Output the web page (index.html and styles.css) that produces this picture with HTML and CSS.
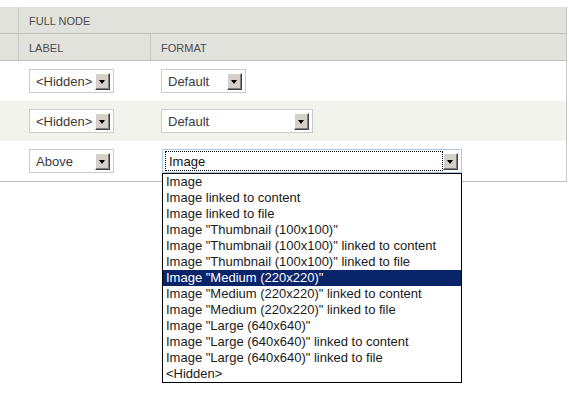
FILE: index.html
```html
<!DOCTYPE html>
<html lang="en">
<head>
  <meta charset="UTF-8" />
  <meta name="viewport" content="width=device-width, initial-scale=1.0"/>
  <link rel="stylesheet" href="styles.css">
  <title>Display fields</title>
</head>
<body>
  <div class="fields-table">
    <!-- cabecera -->
    <div class="head-row">
      <div class="cell first"></div>
      <div class="cell span-2">FULL NODE</div>
    </div>
    <div class="head-row">
      <div class="cell first"></div>
      <div class="cell label-col">LABEL</div>
      <div class="cell">FORMAT</div>
    </div>

    <div class="body-row">
      <div class="cell first"></div>
      <div class="cell label-col">
        <div class="select w-small"><span class="select-text">&lt;Hidden&gt;</span><span class="select-btn"></span></div>
      </div>
      <div class="cell">
        <div class="select w-small"><span class="select-text">Default</span><span class="select-btn"></span></div>
      </div>
    </div>

    <div class="body-row even">
      <div class="cell first"></div>
      <div class="cell label-col">
        <div class="select w-small"><span class="select-text">&lt;Hidden&gt;</span><span class="select-btn"></span></div>
      </div>
      <div class="cell">
        <div class="select w-medium"><span class="select-text">Default</span><span class="select-btn"></span></div>
      </div>
    </div>

    <div class="body-row">
      <div class="cell first"></div>
      <div class="cell label-col">
        <div class="select w-small"><span class="select-text">Above</span><span class="select-btn"></span></div>
      </div>
      <div class="cell">
        <div class="select w-large focused">
          <span class="select-text dotted">Image</span><span class="select-btn"></span>
          <ul class="dropdown">
            <li>Image</li>
            <li>Image linked to content</li>
            <li>Image linked to file</li>
            <li>Image "Thumbnail (100x100)"</li>
            <li>Image "Thumbnail (100x100)" linked to content</li>
            <li>Image "Thumbnail (100x100)" linked to file</li>
            <li class="selected">Image "Medium (220x220)"</li>
            <li>Image "Medium (220x220)" linked to content</li>
            <li>Image "Medium (220x220)" linked to file</li>
            <li>Image "Large (640x640)"</li>
            <li>Image "Large (640x640)" linked to content</li>
            <li>Image "Large (640x640)" linked to file</li>
            <li>&lt;Hidden&gt;</li>
          </ul>
        </div>
      </div>
    </div>
  </div>
</body>
</html>
```

FILE: styles.css
```css
* {
  box-sizing: border-box;
}

:root {
  --head-bg: #e2e2dc;
  --row-alt: #f3f3ee;
  --line: #bfbfba;
  --text-color: #333333;
  --win-gray: #d4d0c8;
  --win-blue: #0a246a;
}

html, body {
  margin: 0;
  padding: 0;
  height: 100%;
  overflow: hidden;
  background: #ffffff;
  font-family: "Liberation Sans", Arial, sans-serif;
  color: var(--text-color);
}

.fields-table {
  width: 567px;
  margin-top: 7px;
  border-right: 1px solid #c8c8c4;
  border-bottom: 1px solid var(--line);
}

.head-row,
.body-row {
  display: flex;
}

.head-row {
  height: 27px;
  background: var(--head-bg);
  border-bottom: 1px solid var(--line);
  font-size: 11px;
  color: #4a4a4a;
}

.head-row .cell {
  display: flex;
  align-items: center;
  padding-left: 10px;
  padding-top: 1px;
}

.head-row .first,
.head-row .label-col {
  border-right: 1px solid #c9c9c3;
}

.cell {
  flex: 1;
}

.cell.first {
  flex: none;
  width: 19px;
  padding: 0;
}

.cell.label-col {
  flex: none;
  width: 132px;
}

.body-row {
  height: 40px;
  align-items: center;
}

.body-row .cell {
  padding-left: 10px;
}

.body-row .cell.first {
  padding: 0;
}

.body-row.even {
  background: var(--row-alt);
}

/* selects dibujados a mano */
.select {
  position: relative;
  display: flex;
  align-items: center;
  height: 24px;
  border: 1px solid #cccccc;
  background: #ffffff;
  padding: 0 3px 0 6px;
  font-size: 13px;
}

.w-small { width: 85px; }
.w-medium { width: 152px; }
.w-large { width: 300px; margin-left: 1px; }

.select-text {
  flex: 1;
  white-space: nowrap;
  color: #3a3a3a;
}

.select-btn {
  position: relative;
  flex: none;
  width: 15px;
  height: 17px;
  background: var(--win-gray);
  border-top: 1px solid #ffffff;
  border-left: 1px solid #ffffff;
  border-right: 1px solid #404040;
  border-bottom: 1px solid #404040;
  box-shadow: inset -1px -1px 0 #808080;
}

.select-btn::after {
  content: '';
  position: absolute;
  left: 3px;
  top: 6px;
  border-left: 3.5px solid transparent;
  border-right: 3.5px solid transparent;
  border-top: 4px solid #000000;
}

.select.focused {
  border-color: #a9c6e3;
  padding-left: 2px;
}

.select-text.dotted {
  align-self: stretch;
  margin: 1px 0;
  padding-left: 3px;
  display: flex;
  align-items: center;
  border: 1px dotted #000000;
  color: #111111;
}

.dropdown {
  position: absolute;
  left: -1px;
  top: 23px;
  width: 300px;
  margin: 0;
  padding: 0;
  list-style: none;
  background: #ffffff;
  border: 1px solid #000000;
  z-index: 2;
}

.dropdown li {
  height: 16px;
  line-height: 16px;
  padding-left: 3px;
  font-size: 13px;
  color: #1a1a1a;
  white-space: nowrap;
}

.dropdown li.selected {
  background: var(--win-blue);
  color: #ffffff;
}
```
